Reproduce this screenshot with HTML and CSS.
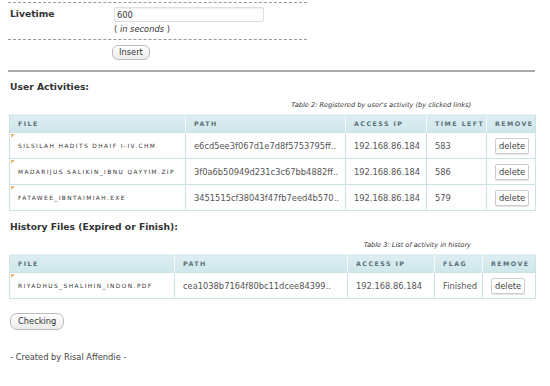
FILE: index.html
```html
<!DOCTYPE html>
<html>
<head>
<meta charset="utf-8">
<link rel="stylesheet" href="styles.css">
</head>
<body>
<div class="form">
  <div class="form-row">
    <div class="label">Livetime</div>
    <div class="field">
      <div class="input">600</div>
      <div class="hint">( <i>in seconds</i> )</div>
    </div>
  </div>
  <div class="form-actions">
    <button class="btn">Insert</button>
  </div>
</div>
<hr class="sep">

<h3 class="heading">User Activities:</h3>
<div class="caption"><i>Table 2: Registered by user's activity (by clicked links)</i></div>
<table class="grid g1">
  <colgroup><col class="c1"><col class="c2"><col class="c3"><col class="c4"><col class="c5"></colgroup>
  <thead><tr><th>File</th><th>Path</th><th>Access IP</th><th>Time Left</th><th>Remove</th></tr></thead>
  <tbody>
    <tr><td class="file">SILSILAH HADITS DHAIF I-IV.CHM</td><td>e6cd5ee3f067d1e7d8f5753795ff..</td><td>192.168.86.184</td><td>583</td><td class="rm"><span class="del">delete</span></td></tr>
    <tr><td class="file">MADARIJUS SALIKIN_IBNU QAYYIM.ZIP</td><td>3f0a6b50949d231c3c67bb4882ff..</td><td>192.168.86.184</td><td>586</td><td class="rm"><span class="del">delete</span></td></tr>
    <tr><td class="file">FATAWEE_IBNTAIMIAH.EXE</td><td>3451515cf38043f47fb7eed4b570..</td><td>192.168.86.184</td><td>579</td><td class="rm"><span class="del">delete</span></td></tr>
  </tbody>
</table>

<h3 class="heading h2">History Files (Expired or Finish):</h3>
<div class="caption"><i>Table 3: List of activity in history</i></div>
<table class="grid g2">
  <colgroup><col class="d1"><col class="d2"><col class="d3"><col class="d4"><col class="d5"></colgroup>
  <thead><tr><th>File</th><th>Path</th><th>Access IP</th><th>Flag</th><th>Remove</th></tr></thead>
  <tbody>
    <tr><td class="file">RIYADHUS_SHALIHIN_INDON.PDF</td><td>cea1038b7164f80bc11dcee84399..</td><td>192.168.86.184</td><td>Finished</td><td class="rm"><span class="del">delete</span></td></tr>
  </tbody>
</table>

<div class="check"><button class="btn">Checking</button></div>
<p class="footer">- Created by Risal Affendie -</p>
</body>
</html>
```

FILE: styles.css
```css
html, body { margin: 0; padding: 0; background: #fff; }
body {
  font-family: "DejaVu Sans", Verdana, sans-serif;
  font-size: 8.3px;
  color: #444;
  padding: 0 15px 0 8px;
  width: 527px;
}
.form { width: 299px; }
.form-row {
  display: flex;
  border-top: 1px dashed #999;
  border-bottom: 1px dashed #999;
  margin-top: 2px;
  padding: 4px 0 4px 0;
  height: 28px;
}
.label {
  width: 104px;
  font-weight: bold;
  font-size: 9.2px;
  color: #333;
  padding: 1px 0 0 2px;
}
.input {
  width: 146px;
  height: 13px;
  border: 1px solid #ddd;
  border-radius: 2px;
  box-shadow: inset 0 1px 1px #eee;
  padding-left: 2px;
  line-height: 14px;
  font-size: 8.3px;
  color: #333;
}
.hint { margin-top: 2px; font-size: 8.3px; color: #333; }
.form-actions { padding: 5px 0 0 104px; }
.btn {
  font-family: "DejaVu Sans", Verdana, sans-serif;
  font-size: 8.3px;
  color: #333;
  height: 15px;
  padding: 0 6px;
  border: 1px solid #bbb;
  border-radius: 6px;
  background: linear-gradient(#fff, #ececec);
  line-height: 13px;
}
.sep {
  border: 0;
  height: 2px;
  background: #aaa;
  margin: 10px 0 0 0;
  width: 527px;
}
.heading {
  font-size: 9.2px;
  font-weight: bold;
  color: #333;
  margin: 9px 0 0 2px;
  height: 11px;
  line-height: 11px;
}
.h2 { margin-top: 10px; }
.caption {
  text-align: right;
  padding-right: 64px;
  font-size: 6.6px;
  color: #333;
  margin-top: 9px;
  height: 9px;
  line-height: 9px;
  letter-spacing: 0;
}
.grid {
  border-collapse: collapse;
  width: 526px;
  margin-left: 1px;
  margin-top: 4px;
  table-layout: fixed;
  border: 1px solid #cde2e5;
}
.c1 { width: 176px; } .c2 { width: 160px; } .c3 { width: 81px; } .c4 { width: 60px; } .c5 { width: 49px; }
.d1 { width: 165px; } .d2 { width: 173px; } .d3 { width: 87px; } .d4 { width: 48px; } .d5 { width: 53px; }
.grid thead tr { height: 18px; }
.grid tbody tr { height: 26px; }
.grid th {
  background: linear-gradient(#dceef1, #cfe6ea);
  border-left: 1px solid #f4fafb;
  border-top: 1px solid #e6f2f4;
  text-align: left;
  padding: 0 0 0 8px;
  font-size: 6.3px;
  letter-spacing: 1.45px;
  text-transform: uppercase;
  color: #5b7079;
  font-weight: bold;
  white-space: nowrap;
  overflow: hidden;
}
.grid th:first-child { border-left: 0; }
.grid td {
  border: 1px solid #cde2e5;
  padding: 0 0 0 8px;
  color: #555;
  white-space: nowrap;
  overflow: hidden;
}
.grid td.file {
  position: relative;
  font-size: 5.9px;
  letter-spacing: 1.4px;
  color: #333;
}
.grid td.file::before {
  content: "";
  position: absolute;
  left: 1px;
  top: 1px;
  border-top: 4px solid #e2b577;
  border-right: 4px solid transparent;
}
.grid td.rm { padding-left: 8px; }
.del {
  display: inline-block;
  border: 1px solid #ccc;
  border-radius: 2px;
  padding: 2px 3px;
  line-height: 10px;
  color: #444;
  background: #fff;
  box-shadow: 0 1px 1px #e4e4e4;
}
.check { margin: 14px 0 0 2px; }
.check .btn { height: 17px; padding: 0 7px; border-radius: 7px; }
.footer { margin: 22px 0 0 2px; font-size: 8.3px; color: #444; }
```
